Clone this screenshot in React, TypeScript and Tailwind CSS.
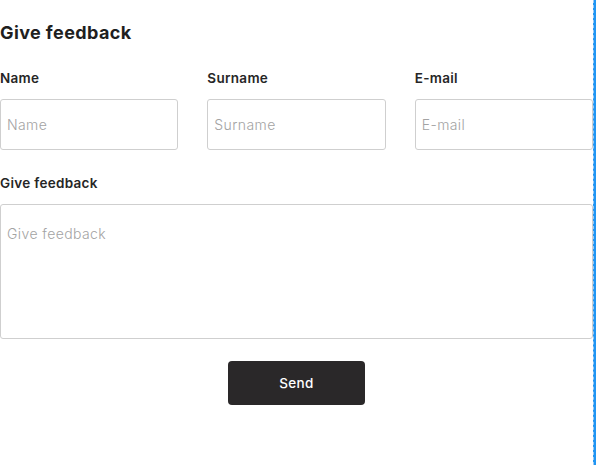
const font = { fontFamily: "Inter, 'Liberation Sans', sans-serif" };

function Field({ label }: { label: string }) {
  return (
    <div className="flex flex-col">
      <label className="text-[13.5px] font-semibold tracking-[0.3px] text-[#262626] leading-[16px] h-[16px]">
        {label}
      </label>
      <input
        placeholder={label}
        className="mt-[13px] h-[51px] w-full rounded-[3px] border border-[#cfcfcf] bg-white px-[6px] text-[14px] font-light tracking-[0.4px] text-[#262626] placeholder:text-[#a3a3a3] outline-none"
      />
    </div>
  );
}

export default function App() {
  return (
    <div className="flex h-[465px] w-[598px] bg-white" style={font}>
      <div className="w-[593px] flex flex-col">
        <h1 className="mt-[23px] text-[18px] font-bold tracking-[0.4px] text-[#1f1f1f] leading-[20px]">
          Give feedback
        </h1>
        <div className="mt-[27px] grid grid-cols-3 gap-x-[29px]">
          <Field label="Name" />
          <Field label="Surname" />
          <Field label="E-mail" />
        </div>
        <label className="mt-[25px] text-[13.5px] font-semibold tracking-[0.3px] text-[#262626] leading-[16px]">
          Give feedback
        </label>
        <textarea
          placeholder="Give feedback"
          className="mt-[13px] h-[135px] w-full resize-none rounded-[3px] border border-[#cfcfcf] px-[6px] py-[20px] text-[14px] font-light tracking-[0.4px] leading-[18px] placeholder:text-[#a3a3a3] outline-none"
        />
        <div className="mt-[22px] flex justify-center">
          <button className="h-[44px] w-[137px] rounded-[4px] bg-[#2a2829] text-[13.5px] font-medium tracking-[0.4px] text-white">
            Send
          </button>
        </div>
      </div>
      <div className="h-full w-[3px] border-l border-dashed border-[#9ccaf5] bg-[#2196f3]" />
    </div>
  );
}
